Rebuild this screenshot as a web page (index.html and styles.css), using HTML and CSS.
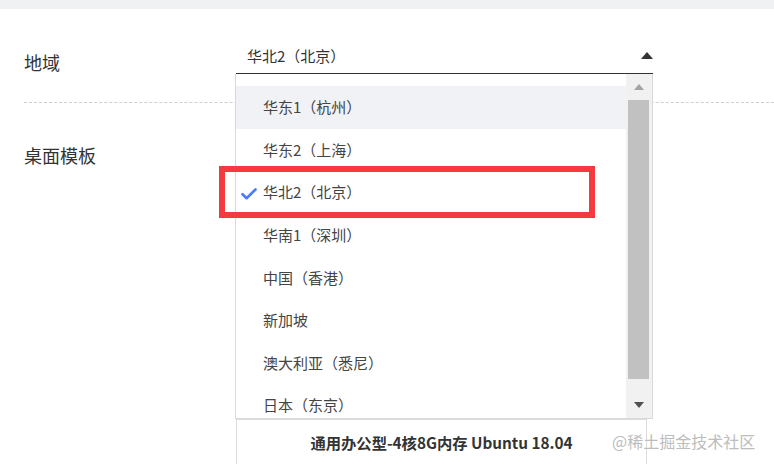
FILE: index.html
```html
<!DOCTYPE html>
<html lang="zh-CN">
<head>
<meta charset="utf-8">
<title>地域选择</title>
<link rel="stylesheet" href="styles.css">
</head>
<body>
  <div class="topbar"></div>
  <main class="form">
    <div class="row row-region">
      <div class="label label-region">地域</div>
      <div class="field">
        <div class="select">
          <span class="select-value">华北2（北京）</span>
          <span class="caret-up"></span>
        </div>
        <div class="dropdown">
          <ul class="options">
            <li class="option hover">华东1（杭州）</li>
            <li class="option">华东2（上海）</li>
            <li class="option selected">
              <svg class="check" width="16" height="12" viewBox="0 0 16 12"><path d="M1.5 6.2 L5.6 10.2 L14.5 1.5" fill="none" stroke="#4a7cf3" stroke-width="2.6" stroke-linecap="round" stroke-linejoin="round"/></svg>
              华北2（北京）
            </li>
            <li class="option">华南1（深圳）</li>
            <li class="option">中国（香港）</li>
            <li class="option">新加坡</li>
            <li class="option">澳大利亚（悉尼）</li>
            <li class="option">日本（东京）</li>
          </ul>
          <div class="scrollbar">
            <div class="sb-btn"><span class="arrow-up"></span></div>
            <div class="sb-track"><div class="sb-thumb"></div></div>
            <div class="sb-btn"><span class="arrow-down"></span></div>
          </div>
        </div>
      </div>
    </div>
    <div class="row row-template">
      <div class="label label-template">桌面模板</div>
      <div class="cards">
        <div class="card card-thumb"></div>
        <div class="card card-thumb"></div>
        <div class="card card-thumb"></div>
        <div class="card card-name">通用办公型-4核8G内存 Ubuntu 18.04</div>
      </div>
    </div>
  </main>
  <div class="annot"></div>
  <div class="watermark">@稀土掘金技术社区</div>
</body>
</html>
```

FILE: styles.css
```css
* { box-sizing: border-box; }

html, body {
  margin: 0;
  padding: 0;
  width: 774px;
  height: 464px;
  overflow: hidden;
  background: #fff;
  font-family: "Noto Sans CJK SC", "Noto Sans", sans-serif;
  color: #333;
  position: relative;
}

.topbar {
  height: 9px;
  background: #f0f1f3;
}

.form {
  padding-left: 24px;
}

.row {
  display: flex;
  align-items: flex-start;
}

.row-region {
  height: 94px;
  border-bottom: 1px dashed #cfcfcf;
}

.label {
  width: 212px;
  flex: none;
  font-size: 18px;
  line-height: 24px;
  color: #333;
}

.label-region { margin-top: 41px; }
.label-template { margin-top: 40px; }

.field {
  position: relative;
  margin-top: 34px;
  width: 417px;
  z-index: 2;
}

.select {
  height: 31px;
  border-bottom: 1px solid #333;
  display: flex;
  align-items: center;
  justify-content: space-between;
  padding-left: 11px;
  padding-bottom: 4px;
}

.select-value {
  font-size: 15px;
  line-height: 20px;
  color: #333;
}

.caret-up {
  width: 0;
  height: 0;
  border-left: 6.5px solid transparent;
  border-right: 6.5px solid transparent;
  border-bottom: 7px solid #333;
  margin-top: -2px;
}

.dropdown {
  position: absolute;
  top: 100%;
  left: -1px;
  width: 418px;
  height: 345px;
  background: #fff;
  border: 1px solid #d9d9d9;
  border-top: none;
  display: flex;
}

.options {
  list-style: none;
  margin: 0;
  padding: 12px 0 0 0;
  flex: 1;
  overflow: hidden;
}

.option {
  position: relative;
  height: 42.6px;
  display: flex;
  align-items: center;
  padding-left: 27px;
  font-size: 15px;
  line-height: 20px;
  color: #444;
}

.option.hover {
  background: #f0f2f5;
}

.check {
  position: absolute;
  left: 5px;
  top: 17px;
}

.scrollbar {
  width: 26px;
  flex: none;
  background: #f1f1f1;
  display: flex;
  flex-direction: column;
}

.sb-btn {
  height: 26px;
  flex: none;
  display: flex;
  align-items: center;
  justify-content: center;
  padding-right: 1px;
}

.arrow-up {
  width: 0;
  height: 0;
  border-left: 5.5px solid transparent;
  border-right: 5.5px solid transparent;
  border-bottom: 6px solid #a3a3a3;
}

.arrow-down {
  width: 0;
  height: 0;
  border-left: 5.5px solid transparent;
  border-right: 5.5px solid transparent;
  border-top: 6px solid #505050;
}

.sb-track {
  flex: 1;
  padding: 0 3px 0 2px;
}

.sb-thumb {
  height: 279px;
  background: #c1c1c1;
}

.cards {
  width: 411px;
  padding-top: 22px;
  display: flex;
  flex-direction: column;
  gap: 10px;
}

.card {
  height: 88px;
  border: 1px solid #dcdcdc;
}

.card-name {
  height: 45px;
  border-bottom: none;
  padding-top: 11px;
  text-align: center;
  font-size: 15.3px;
  line-height: 22px;
  font-weight: 700;
  color: #333;
}

.annot {
  position: absolute;
  left: 219px;
  top: 166px;
  width: 376px;
  height: 52px;
  border: 6.5px solid #f53a3f;
  z-index: 5;
}

.watermark {
  position: absolute;
  left: 612px;
  top: 430px;
  font-size: 16px;
  line-height: 22px;
  color: #bdbdbd;
  z-index: 6;
  text-shadow: 0 0 1px rgba(255,255,255,0.8);
}
```
